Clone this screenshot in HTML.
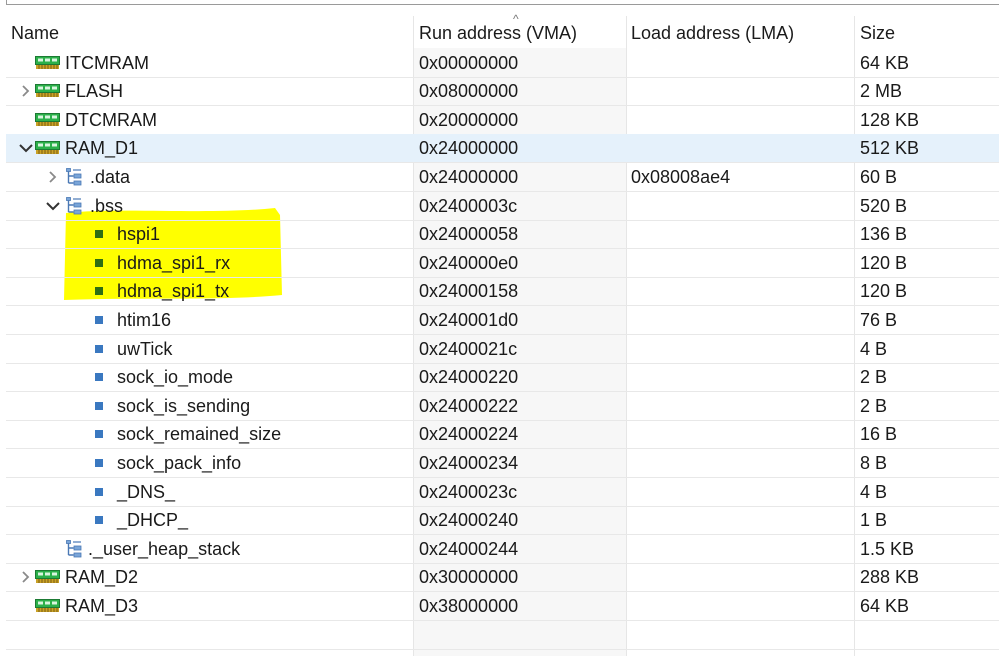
<!DOCTYPE html>
<html><head><meta charset="utf-8"><style>
html,body{margin:0;padding:0;width:999px;height:656px;overflow:hidden;background:#fff;font-family:"Liberation Sans",sans-serif;font-size:18px;color:#1a1a1a;}
.a{position:absolute;white-space:nowrap;}
.row{position:absolute;left:6px;width:993px;height:28px;border-bottom:1px solid #e8e8e8;}
.t{position:absolute;line-height:28px;top:0;}
.ram{position:absolute;width:25px;height:13px;}
.sq{position:absolute;width:8px;height:8px;}
</style></head><body>
<div class="a" style="left:6px;top:-2px;width:1000px;height:6px;border:1px solid #9a9a9a;border-top:none;border-right:none;"></div>
<div class="a" style="left:413px;top:16px;width:213px;height:640px;background:#f7f7f7;"></div>
<div class="a" style="left:413px;top:16px;width:1px;height:640px;background:#e6e6e6;"></div>
<div class="a" style="left:626px;top:16px;width:1px;height:640px;background:#e6e6e6;"></div>
<div class="a" style="left:854px;top:16px;width:1px;height:640px;background:#e6e6e6;"></div>
<div class="a" style="left:6px;top:16px;width:993px;height:32px;background:#fff;"></div>
<div class="a" style="left:413px;top:16px;width:1px;height:32px;background:#e6e6e6;"></div>
<div class="a" style="left:626px;top:16px;width:1px;height:32px;background:#e6e6e6;"></div>
<div class="a" style="left:854px;top:16px;width:1px;height:32px;background:#e6e6e6;"></div>
<div class="a" style="left:11px;top:20px;line-height:26px">Name</div>
<div class="a" style="left:419px;top:20px;line-height:26px">Run address (VMA)</div>
<div class="a" style="left:513px;top:12px;font-size:12px;color:#777">&#94;</div>
<div class="a" style="left:631px;top:20px;line-height:26px">Load address (LMA)</div>
<div class="a" style="left:860px;top:20px;line-height:26px">Size</div>
<svg class="a" style="left:60px;top:205px" width="225" height="100"><path d="M6 8 C60 2 150 10 215 3 L220 10 L222 90 C160 96 90 92 4 95 Z" fill="#ffff00"/></svg>
<div id="rows"></div>
<script>
var R=[
[0,'ram','ITCMRAM','0x00000000','','64 KB',0],
[0,'ram','FLASH','0x08000000','','2 MB','>'],
[0,'ram','DTCMRAM','0x20000000','','128 KB',0],
[0,'ram','RAM_D1','0x24000000','','512 KB','v'],
[1,'tree','.data','0x24000000','0x08008ae4','60 B','>'],
[1,'tree','.bss','0x2400003c','','520 B','v'],
[2,'g','hspi1','0x24000058','','136 B',0],
[2,'g','hdma_spi1_rx','0x240000e0','','120 B',0],
[2,'g','hdma_spi1_tx','0x24000158','','120 B',0],
[2,'b','htim16','0x240001d0','','76 B',0],
[2,'b','uwTick','0x2400021c','','4 B',0],
[2,'b','sock_io_mode','0x24000220','','2 B',0],
[2,'b','sock_is_sending','0x24000222','','2 B',0],
[2,'b','sock_remained_size','0x24000224','','16 B',0],
[2,'b','sock_pack_info','0x24000234','','8 B',0],
[2,'b','_DNS_','0x2400023c','','4 B',0],
[2,'b','_DHCP_','0x24000240','','1 B',0],
[1,'tree','._user_heap_stack','0x24000244','','1.5 KB',0],
[0,'ram','RAM_D2','0x30000000','','288 KB','>'],
[0,'ram','RAM_D3','0x38000000','','64 KB',0],
[0,'','','','','',0]];
var h='';
R.forEach(function(r,i){
 var top=48.5+i*28.6;
 var bg=(i==3)?'background:#e5f1fb;':'';
 h+='<div class="row" style="top:'+top+'px;'+bg+'">';
 var lv=r[0];
 if(r[6]){var cx=lv==0?14:41;
  if(r[6]=='>')h+='<svg class="a" style="left:'+cx+'px;top:8px" width="12" height="12"><path d="M3 1 L8 6 L3 11" stroke="#8a8a8a" stroke-width="1.8" fill="none"/></svg>';
  else h+='<svg class="a" style="left:'+(cx-1)+'px;top:8px" width="14" height="12"><path d="M1 3 L7 9 L13 3" stroke="#333" stroke-width="2" fill="none"/></svg>';}
 if(r[1]=='ram'){h+='<svg class="a" style="left:29px;top:7px" width="26" height="14"><rect x="0.5" y="0.5" width="24" height="8" fill="#2bb04a" stroke="#1c7a33"/><rect x="3" y="2.5" width="5" height="3" fill="#d9f5df"/><rect x="10" y="2.5" width="5" height="3" fill="#d9f5df"/><rect x="17" y="2.5" width="5" height="3" fill="#d9f5df"/><rect x="1" y="9" width="23" height="4" fill="#c9a227"/><path d="M4 9v4M7 9v4M10 9v4M13 9v4M16 9v4M19 9v4M22 9v4" stroke="#7a5c10" stroke-width="1"/></svg>';h+='<div class="t" style="left:59px">'+r[2]+'</div>';}
 else if(r[1]=='tree'){h+='<svg class="a" style="left:60px;top:5px" width="16" height="18"><path d="M2.5 2v13M2.5 8h5M2.5 15h5" stroke="#4a78b5" stroke-width="1.4" fill="none"/><rect x="0.5" y="0.5" width="4" height="3" fill="#7aa5d8" stroke="#4a78b5" stroke-width=".8"/><rect x="8" y="6" width="7" height="4" fill="#7aa5d8" stroke="#4a78b5" stroke-width=".8"/><rect x="8" y="13" width="7" height="4" fill="#7aa5d8" stroke="#4a78b5" stroke-width=".8"/><path d="M7 2h8" stroke="#4a78b5" stroke-width="1.2"/></svg>';h+='<div class="t" style="left:'+(r[2][1]=='_'?82:84)+'px">'+r[2]+'</div>';}
 else if(r[1]=='g'||r[1]=='b'){var c=r[1]=='g'?'#2e6e14':'#3a78c0';h+='<div class="sq" style="left:89px;top:10px;background:'+c+'"></div><div class="t" style="left:111px">'+r[2]+'</div>';}
 h+='<div class="t" style="left:413px">'+r[3]+'</div><div class="t" style="left:625px">'+r[4]+'</div><div class="t" style="left:854px">'+r[5]+'</div></div>';
});
document.getElementById('rows').innerHTML=h;
</script>
</body></html>
